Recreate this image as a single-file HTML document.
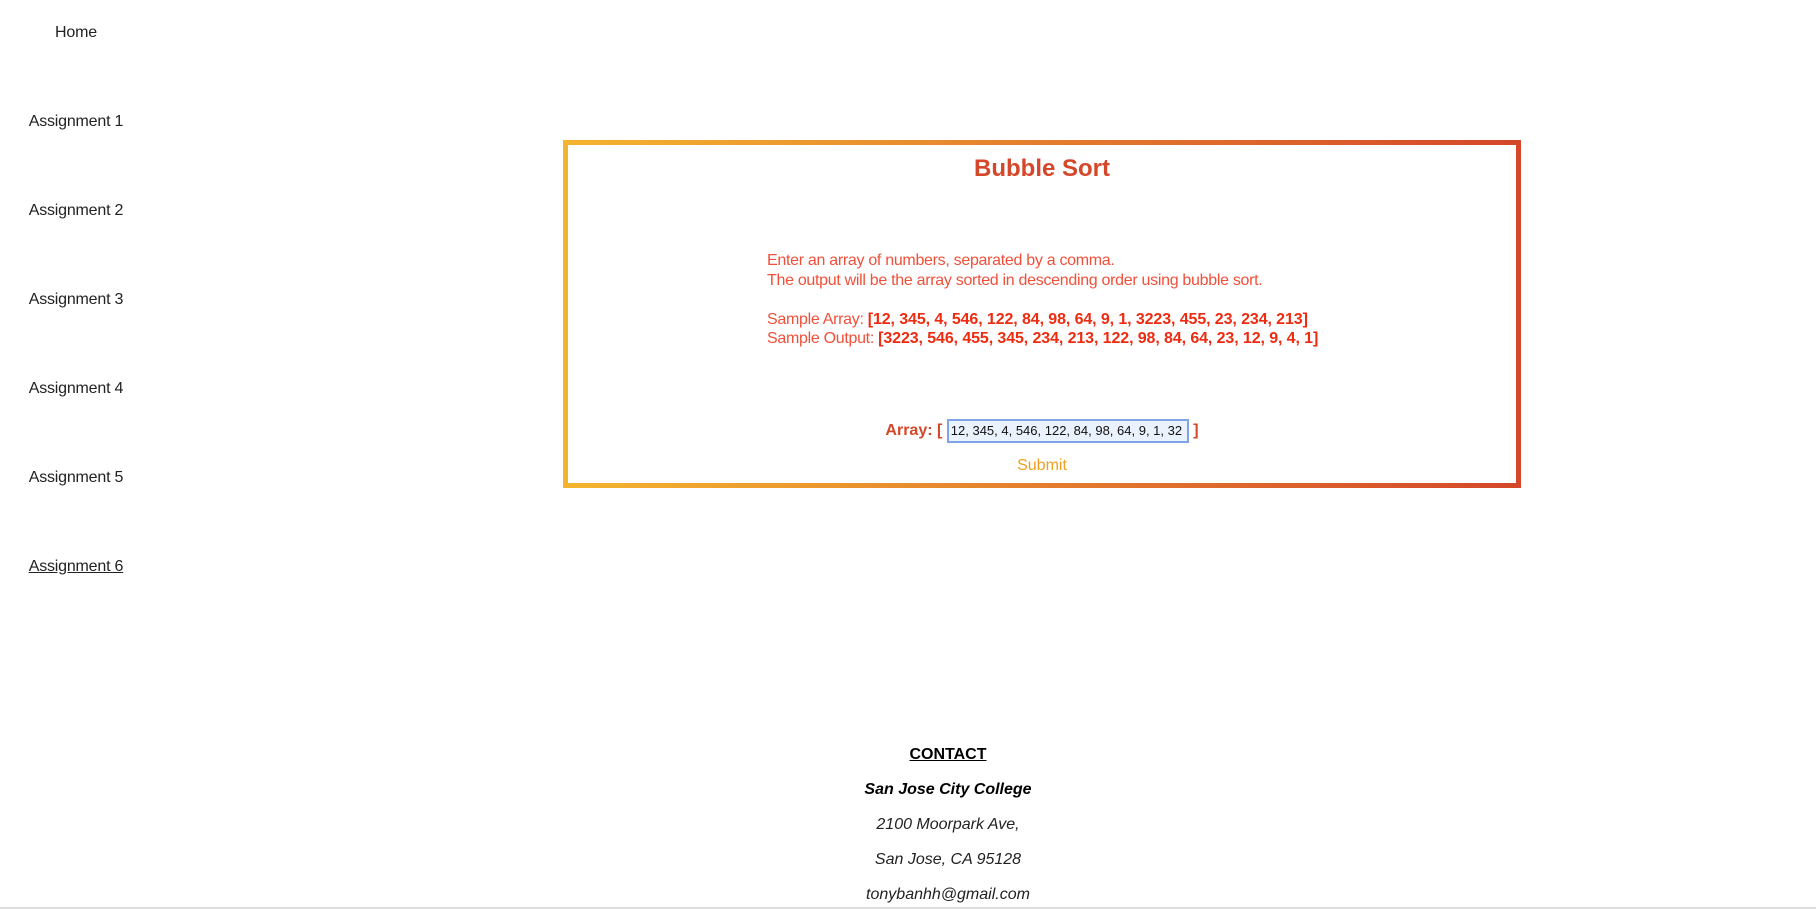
<!DOCTYPE html>
<html><head><style>
body{margin:0;width:1816px;height:909px;overflow:hidden;background:#fff;font-family:"Liberation Sans",sans-serif;position:relative}
.n{position:absolute;width:152px;text-align:center;font-size:16px;color:#222;letter-spacing:-0.2px}
.box{position:absolute;left:563px;top:140px;width:948px;height:338px;border:5px solid;border-image:linear-gradient(90deg,#f4b42f,#d4472a) 1}
.t{position:absolute;left:0;right:0;top:10px;text-align:center;color:#d4472a;font-size:24px;font-weight:bold}
.d{position:absolute;left:199px;top:106px;color:#f0503a;font-size:16px;line-height:19.5px;letter-spacing:-0.3px}
.d b{color:#ee2b10;letter-spacing:-0.1px}
.a{position:absolute;left:0;right:0;top:274px;text-align:center;font-size:16px;color:#d4472a;font-weight:bold}
.a span.in{display:inline-block;width:236px;height:20px;border:2px solid #7fa3e4;background:#eaf2fd;font-weight:normal;color:#111;font-size:13px;text-align:left;padding-left:2px;vertical-align:middle;line-height:20px;overflow:hidden;white-space:nowrap}
.s{position:absolute;left:0;right:0;top:312px;text-align:center;color:#f0a020;font-size:16px}
.f{position:absolute;left:0;width:1896px;text-align:center;font-size:16px;font-style:italic;color:#222}
</style></head><body>
<div class="n" style="left:0;top:24px">Home</div>
<div class="n" style="left:0;top:113px">Assignment 1</div>
<div class="n" style="left:0;top:202px">Assignment 2</div>
<div class="n" style="left:0;top:291px">Assignment 3</div>
<div class="n" style="left:0;top:380px">Assignment 4</div>
<div class="n" style="left:0;top:469px">Assignment 5</div>
<div class="n" style="left:0;top:558px"><u>Assignment 6</u></div>
<div class="box">
<div class="t">Bubble Sort</div>
<div class="d">Enter an array of numbers, separated by a comma.<br>The output will be the array sorted in descending order using bubble sort.<br><br>Sample Array: <b>[12, 345, 4, 546, 122, 84, 98, 64, 9, 1, 3223, 455, 23, 234, 213]</b><br>Sample Output: <b>[3223, 546, 455, 345, 234, 213, 122, 98, 84, 64, 23, 12, 9, 4, 1]</b></div>
<div class="a">Array: [ <span class="in">12, 345, 4, 546, 122, 84, 98, 64, 9, 1, 32</span> ]</div>
<div class="s">Submit</div>
</div>
<div class="f" style="top:746px;font-style:normal;font-weight:bold;color:#000"><u>CONTACT</u></div>
<div class="f" style="top:781px;font-weight:bold;color:#000">San Jose City College</div>
<div class="f" style="top:816px">2100 Moorpark Ave,</div>
<div class="f" style="top:851px">San Jose, CA 95128</div>
<div class="f" style="top:886px">tonybanhh@gmail.com</div>
<div style="position:absolute;left:0;right:0;top:907px;height:2px;background:#ddd"></div>
</body></html>
